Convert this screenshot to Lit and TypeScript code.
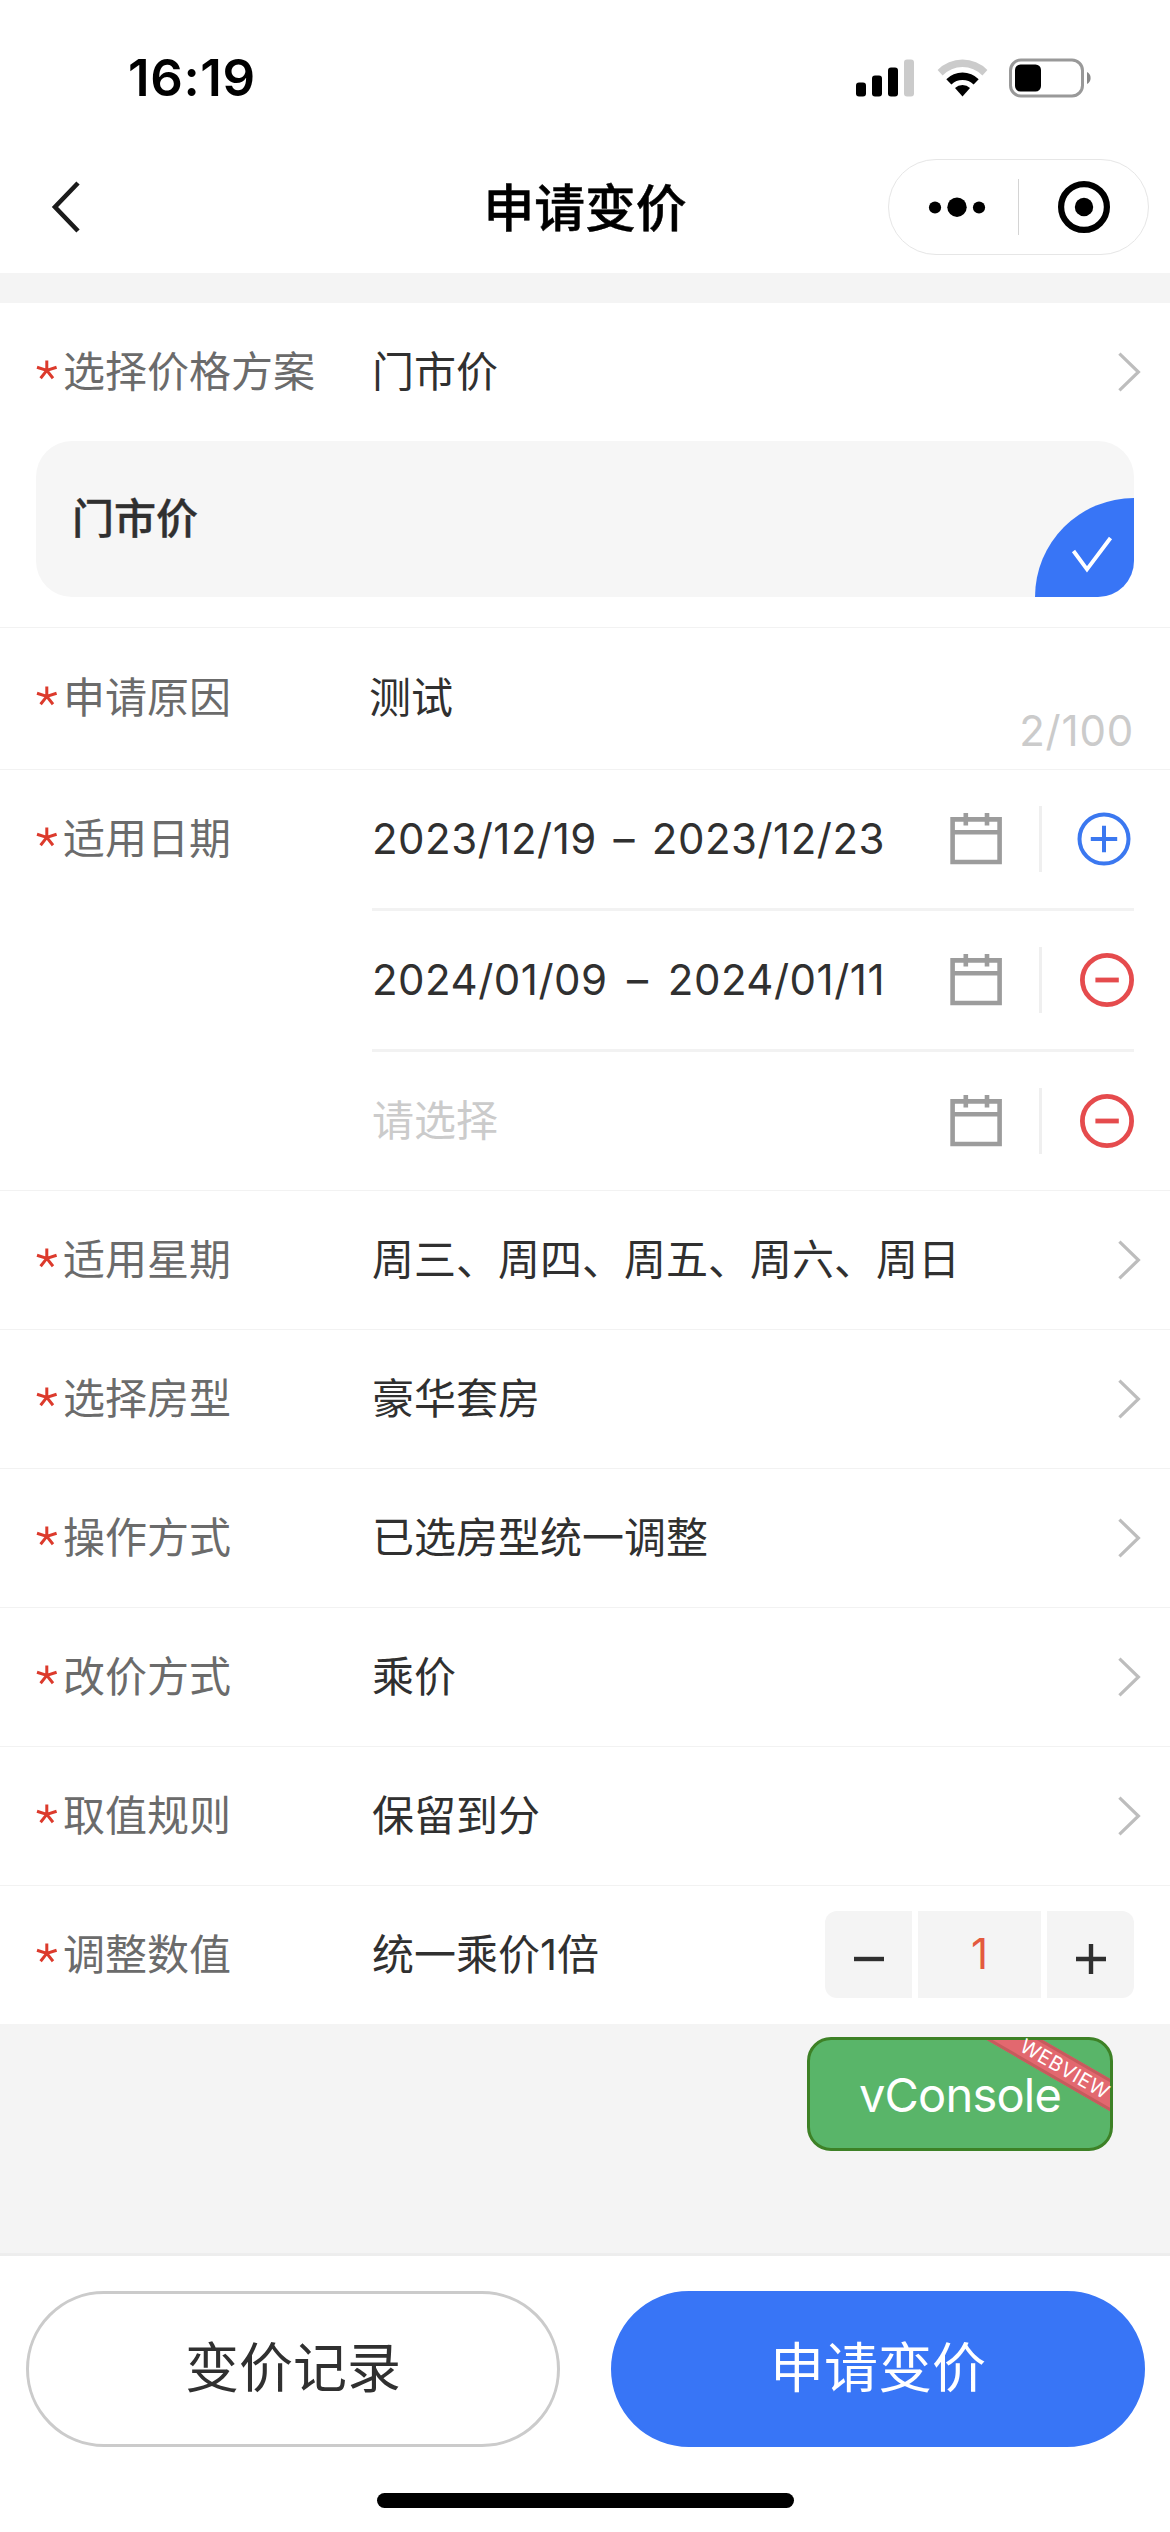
import { LitElement, html, css, svg, nothing } from "lit";
import { customElement, property } from "lit/decorators.js";

interface DateRange {
  from: string;
  to: string;
}

const FONT = css`Inter, "Noto Sans CJK SC", sans-serif`;

@customElement("status-bar")
class StatusBar extends LitElement {
  static styles = css`
    :host {
      display: flex;
      justify-content: space-between;
      align-items: center;
      height: 156px;
      padding: 0 78px 0 128px;
      box-sizing: border-box;
    }
    .time {
      font: 600 51px/60px ${FONT};
      letter-spacing: 0.6px;
      color: #000;
    }
    .icons {
      display: flex;
      align-items: center;
      gap: 21.5px;
    }
    svg {
      display: block;
    }
  `;

  render() {
    return html`
      <span class="time">16:19</span>
      <div class="icons">
        <svg width="59" height="38" viewBox="0 0 59 38">
          <rect x="0" y="23.5" width="10" height="14" rx="3" />
          <rect x="16" y="16.5" width="10" height="21" rx="3" />
          <rect x="32" y="8.5" width="10" height="29" rx="3" />
          <rect x="48" y="0.5" width="10" height="37" rx="3" fill="#cbcbcb" />
        </svg>
        <svg width="51" height="38" viewBox="0 0 51 38">
          <path d="M0.6 11 A35 35 0 0 1 50.4 11 L45.4 16.4 A28 28 0 0 0 5.6 16.4 Z" fill="#cbcbcb" />
          <path d="M9.3 20.2 A23 23 0 0 1 41.7 20.2 L36.6 25.4 A16 16 0 0 0 14.4 25.4 Z" />
          <path d="M18 29 A10.8 10.8 0 0 1 33 29 L25.5 37.5 Z" />
        </svg>
        <svg width="83" height="40" viewBox="0 0 83 40">
          <rect x="1.5" y="2" width="72" height="36" rx="10.5" fill="none" stroke="#999" stroke-width="3" />
          <rect x="6" y="6.5" width="26" height="27" rx="5.5" />
          <path d="M78 14 A6.8 6.8 0 0 1 78 26 Z" fill="#888" />
        </svg>
      </div>
    `;
  }
}

@customElement("nav-bar")
class NavBar extends LitElement {
  @property() heading = "";

  static styles = css`
    :host {
      display: grid;
      grid-template-columns: 1fr auto 1fr;
      align-items: center;
      height: 117px;
      padding: 0 21px 15px 50px;
      box-sizing: border-box;
    }
    .title {
      font: 500 50.8px/72px ${FONT};
      -webkit-text-stroke: 0.5px #000;
      color: #000;
      padding: 4px 29px 0 0;
    }
    .capsule {
      justify-self: end;
      display: flex;
      align-items: center;
      width: 261px;
      height: 96px;
      box-sizing: border-box;
      border: 1px solid #e6e6e6;
      border-radius: 48px;
    }
    .half {
      flex: 1;
      display: flex;
      justify-content: center;
    }
    .more {
      flex: none;
      width: 129px;
      padding-left: 6px;
      box-sizing: border-box;
    }
    .split {
      width: 1px;
      height: 56px;
      background: #d4d4d4;
    }
    svg {
      display: block;
    }
  `;

  render() {
    return html`
      <svg width="32" height="54" viewBox="0 0 32 54">
        <path d="M28 3 L5 27 L28 51" fill="none" stroke="#1b1b1b" stroke-width="4.6" />
      </svg>
      <span class="title">${this.heading}</span>
      <div class="capsule">
        <div class="half more">
          <svg width="58" height="22" viewBox="0 0 58 22">
            <circle cx="7" cy="11.5" r="6.1" />
            <circle cx="29" cy="11.2" r="9.7" />
            <circle cx="51" cy="11.5" r="6.1" />
          </svg>
        </div>
        <div class="split"></div>
        <div class="half">
          <svg width="54" height="54" viewBox="0 0 54 54">
            <circle cx="27" cy="27" r="22.9" fill="none" stroke="#000" stroke-width="6.2" />
            <circle cx="27" cy="27" r="9.2" />
          </svg>
        </div>
      </div>
    `;
  }
}

@customElement("form-row")
class FormRow extends LitElement {
  @property() label = "";
  @property() value = "";
  @property({ type: Boolean }) arrow = false;
  @property({ type: Boolean }) top = false;

  static styles = css`
    :host {
      display: flex;
      align-items: center;
      height: 138px;
      padding-left: 36px;
      padding-right: 36px;
      box-sizing: content-box;
      font: 400 42px/60px ${FONT};
      color: #303030;
    }
    :host([lined]) {
      border-bottom: 1px solid #f2f2f2;
    }
    :host([tall]) {
      height: 139px;
      padding-bottom: 2px;
    }
    :host([top]) {
      height: auto;
      align-items: flex-start;
    }
    .label {
      display: flex;
      align-items: center;
      width: 336px;
      flex: none;
      color: #6b6b6b;
    }
    :host([tall]) .label {
      width: 333px;
    }
    :host([top]) .label {
      height: 138px;
    }
    .star {
      width: 27px;
      display: flex;
    }
    .value {
      flex: 1;
    }
    .extra {
      flex: none;
    }
    :host([top]) .extra {
      flex: 1;
    }
    .arrow {
      margin-right: -8px;
    }
    svg {
      display: block;
    }
  `;

  render() {
    return html`
      <div class="label">
        <span class="star">
          <svg width="22" height="24" viewBox="0 0 22 24">
            <path
              d="M10.8 0.4 V10.4 M10.8 10.4 L1 7.2 M10.8 10.4 L20.6 7.2 M10.8 10.4 L4.6 18.2 M10.8 10.4 L17 18.2"
              fill="none"
              stroke="#dc3a2c"
              stroke-width="3"
            />
          </svg>
        </span>
        <span>${this.label}</span>
      </div>
      ${this.top ? nothing : html`<span class="value">${this.value}</span>`}
      <div class="extra"><slot></slot></div>
      ${this.arrow
        ? html`<svg class="arrow" width="26" height="40" viewBox="0 0 26 40">
            <path d="M3.4 1.6 L22.4 20 L3.4 38.4" fill="none" stroke="#bdbdbd" stroke-width="3.2" />
          </svg>`
        : nothing}
    `;
  }
}

@customElement("date-list")
class DateList extends LitElement {
  @property({ attribute: false }) ranges: (DateRange | null)[] = [];

  static styles = css`
    :host {
      display: block;
      font: 400 42px/60px ${FONT};
      color: #303030;
    }
    .item {
      display: flex;
      align-items: center;
      height: 138px;
    }
    .item + .item {
      border-top: 3px solid #f2f2f2;
    }
    .range {
      display: flex;
      justify-content: space-between;
      width: 513px;
      letter-spacing: 0.5px;
    }
    .empty {
      width: 513px;
      color: #cbcbcb;
    }
    .calendar {
      margin-left: 63px;
    }
    .split {
      width: 3px;
      height: 66px;
      margin: 0 auto 0 35px;
      background: #efefef;
    }
    .plus {
      margin-right: 3px;
    }
    svg {
      display: block;
    }
  `;

  private toggle(first: boolean) {
    const color = first ? "#3b78f0" : "#e54b4d";
    return html`<svg class=${first ? "plus" : "minus"} width="54" height="54" viewBox="0 0 54 54">
      <g fill="none" stroke=${color} stroke-width=${first ? 4 : 4.8}>
        <circle cx="27" cy="27" r=${first ? 24.5 : 24.6} />
        ${first ? svg`<path d="M13.8 27 H40.2 M27 13.8 V40.2" />` : svg`<path d="M15.4 27 H38.8" />`}
      </g>
    </svg>`;
  }

  render() {
    return this.ranges.map(
      (range, index) => html`
        <div class="item">
          ${range
            ? html`<div class="range"><span>${range.from}</span><span>–</span><span>${range.to}</span></div>`
            : html`<div class="empty">请选择</div>`}
          <svg class="calendar" width="56" height="56" viewBox="0 0 56 56">
            <g fill="none" stroke="#9c9c9c" stroke-width="4.6">
              <path d="M4.6 8.4 H51.6 V51 H4.6 Z M4.6 21.3 H51.6" />
              <path d="M17.8 2 V14.6 M39 2 V14.6" />
            </g>
          </svg>
          <div class="split"></div>
          ${this.toggle(index === 0)}
        </div>
      `
    );
  }
}

@customElement("number-stepper")
class NumberStepper extends LitElement {
  @property({ type: Number }) value = 0;

  static styles = css`
    :host {
      display: flex;
      gap: 6px;
      padding-bottom: 1px;
      font: 400 42px/60px ${FONT};
    }
    .cell {
      display: flex;
      align-items: center;
      justify-content: center;
      width: 87px;
      height: 87px;
      background: #f4f4f4;
    }
    .minus {
      border-radius: 12px 0 0 12px;
    }
    .plus {
      border-radius: 0 12px 12px 0;
    }
    .number {
      width: 123px;
      color: #e35a3e;
      padding-bottom: 1px;
      box-sizing: border-box;
    }
    svg {
      display: block;
      margin-top: 8px;
    }
  `;

  render() {
    return html`
      <div class="cell minus">
        <svg width="32" height="32" viewBox="0 0 32 32">
          <path d="M1 16 H31" stroke="#2f2f2f" stroke-width="4.4" />
        </svg>
      </div>
      <div class="cell number">${this.value}</div>
      <div class="cell plus">
        <svg width="32" height="32" viewBox="0 0 32 32">
          <path d="M1 16 H31 M16 1 V31" stroke="#2f2f2f" stroke-width="4.4" />
        </svg>
      </div>
    `;
  }
}

@customElement("console-button")
class ConsoleButton extends LitElement {
  static styles = css`
    :host {
      position: absolute;
      right: 57px;
      top: 13px;
      width: 306px;
      height: 114px;
      color: #fff;
    }
    .box {
      position: relative;
      display: flex;
      align-items: center;
      justify-content: center;
      height: 114px;
      box-sizing: border-box;
      border: 3px solid #3d8126;
      border-radius: 24px;
      background: #59b569;
      overflow: hidden;
      font: 400 47px/60px ${FONT};
    }
    .text {
      position: relative;
      padding-top: 2px;
      letter-spacing: -0.8px;
    }
    .ribbon {
      position: absolute;
      left: 155px;
      top: 15px;
      width: 200px;
      height: 28px;
      box-sizing: border-box;
      border: solid #c65b5d;
      border-width: 3px 0;
      background: #e2686f;
      transform: rotate(30deg);
    }
    .tag {
      position: absolute;
      left: 208px;
      top: 21px;
      width: 100px;
      text-align: center;
      white-space: nowrap;
      font: 400 20px/22px ${FONT};
      letter-spacing: 0.5px;
      transform: rotate(30deg);
    }
  `;

  render() {
    return html`
      <div class="box"><span class="ribbon"></span><span class="text">vConsole</span></div>
      <span class="tag">WEBVIEW</span>
    `;
  }
}

@customElement("app-root")
class AppRoot extends LitElement {
  static styles = css`
    :host {
      display: flex;
      flex-direction: column;
      width: 1170px;
      height: 2532px;
      background: #f4f4f4;
      font: 400 42px/60px ${FONT};
      color: #303030;
      overflow: hidden;
    }
    .header {
      background: #fff;
    }
    .form {
      margin-top: 30px;
      background: #fff;
    }
    .plans {
      padding: 0 36px 30px;
      border-bottom: 1px solid #f2f2f2;
    }
    .plan {
      position: relative;
      display: flex;
      align-items: center;
      height: 156px;
      padding-left: 36px;
      border-radius: 36px;
      background: #f6f6f6;
      overflow: hidden;
      font-weight: 500;
      -webkit-text-stroke: 0.4px #303030;
    }
    .chosen {
      position: absolute;
      right: 0;
      bottom: 0;
      width: 99px;
      height: 99px;
      border-top-left-radius: 99px;
      background: #3875f6;
    }
    .count {
      color: #cbcbcb;
      padding-top: 66px;
      letter-spacing: 0.8px;
    }
    .body {
      position: relative;
      flex: 1;
    }
    .footer {
      height: 279px;
      box-sizing: border-box;
      border-top: 3px solid #ededed;
      background: #fff;
      display: flex;
      flex-direction: column;
      align-items: center;
      justify-content: space-between;
      padding: 35px 25px 24px 26px;
    }
    .buttons {
      display: flex;
      align-self: stretch;
      gap: 51px;
    }
    .button {
      flex: 1;
      display: flex;
      align-items: center;
      justify-content: center;
      height: 156px;
      box-sizing: border-box;
      border: 3px solid #cbcbcb;
      border-radius: 78px;
      font-size: 54px;
      line-height: 78px;
    }
    .primary {
      border-color: #3875f6;
      background: #3875f6;
      color: #fff;
    }
    .indicator {
      width: 417px;
      height: 15px;
      border-radius: 8px;
      background: #000;
    }
  `;

  private ranges: (DateRange | null)[] = [
    { from: "2023/12/19", to: "2023/12/23" },
    { from: "2024/01/09", to: "2024/01/11" },
    null,
  ];

  private choices = [
    ["适用星期", "周三、周四、周五、周六、周日"],
    ["选择房型", "豪华套房"],
    ["操作方式", "已选房型统一调整"],
    ["改价方式", "乘价"],
    ["取值规则", "保留到分"],
  ];

  render() {
    return html`
      <div class="header">
        <status-bar></status-bar>
        <nav-bar heading="申请变价"></nav-bar>
      </div>
      <div class="form">
        <form-row label="选择价格方案" value="门市价" arrow></form-row>
        <div class="plans">
          <div class="plan">
            <span>门市价</span>
            <svg class="chosen" viewBox="0 0 99 99">
              <path d="M38.5 53 L52 71.3 L75.5 40" fill="none" stroke="#fff" stroke-width="3.9" />
            </svg>
          </div>
        </div>
        <form-row label="申请原因" value="测试" lined tall><div class="count">2/100</div></form-row>
        <form-row label="适用日期" top lined><date-list .ranges=${this.ranges}></date-list></form-row>
        ${this.choices.map(
          ([label, value]) => html`<form-row label=${label} value=${value} arrow lined></form-row>`
        )}
        <form-row label="调整数值" value="统一乘价1倍"><number-stepper value="1"></number-stepper></form-row>
      </div>
      <div class="body"><console-button></console-button></div>
      <div class="footer">
        <div class="buttons">
          <div class="button">变价记录</div>
          <div class="button primary">申请变价</div>
        </div>
        <div class="indicator"></div>
      </div>
    `;
  }
}
